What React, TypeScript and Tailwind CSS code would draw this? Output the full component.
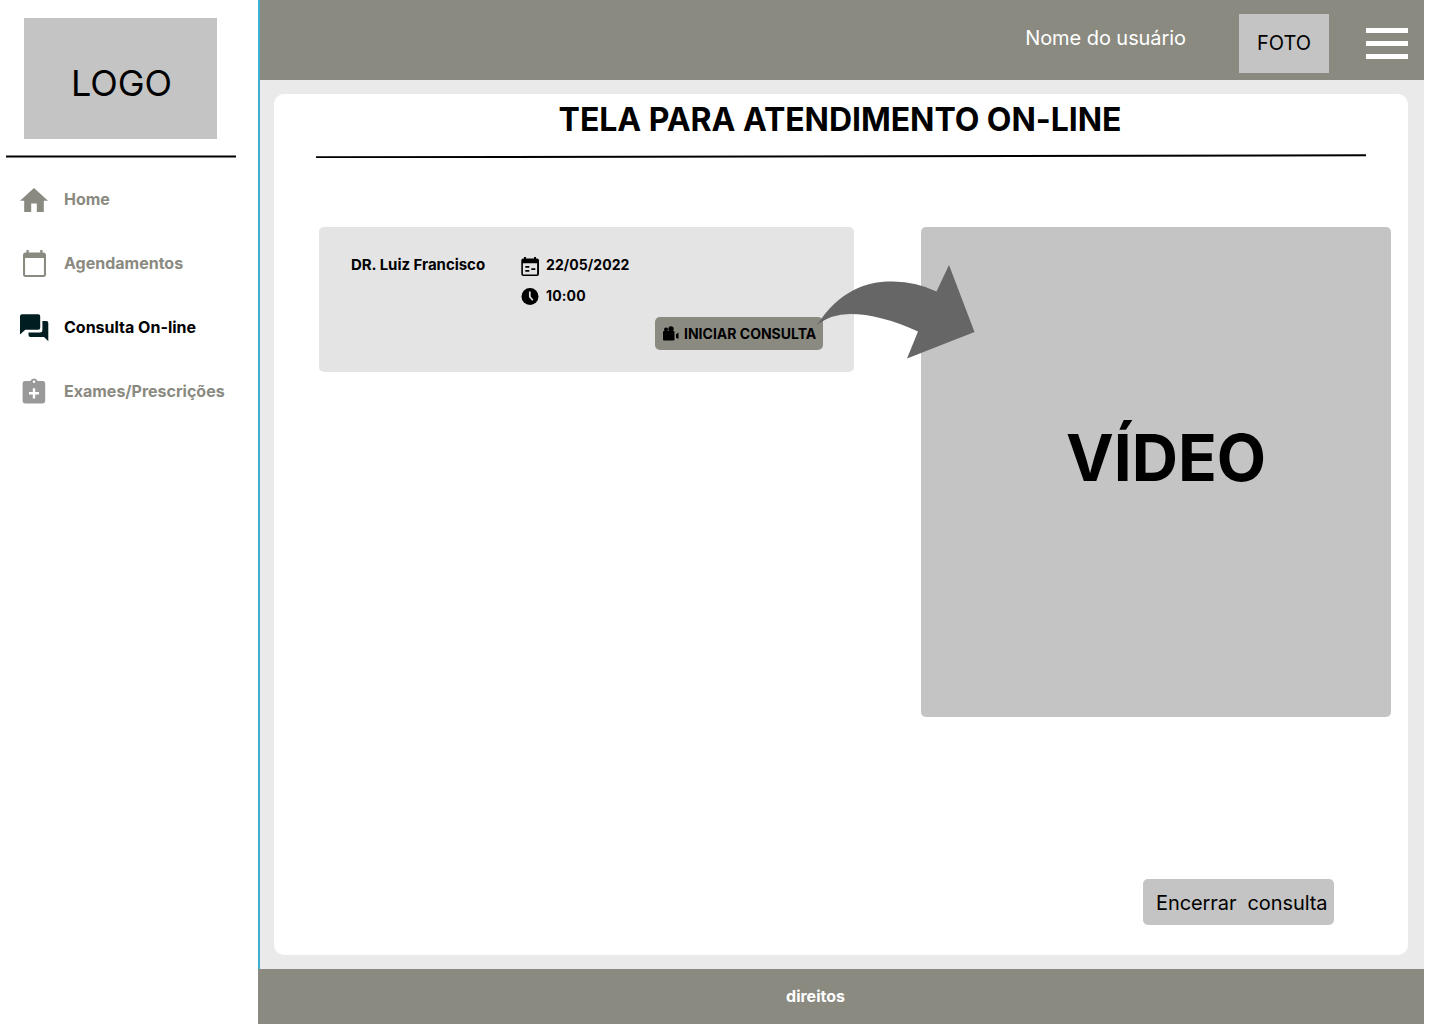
import React from "react";

function HomeIcon() {
  return (
    <svg className="mt-[18px] ml-5 h-6 w-7" viewBox="2 3 20 17" preserveAspectRatio="none" fill="#8a8a81">
      <path d="M10 20v-6h4v6h5v-8h3L12 3 2 12h3v8z" />
    </svg>
  );
}

function CalendarIcon() {
  return (
    <svg className="mt-4 ml-[23px] h-[27px] w-[23px]" viewBox="2 1 20 22" preserveAspectRatio="none" fill="#8a8a81">
      <path d="M20 3h-1V1h-2v2H7V1H5v2H4c-1.100 0-2 .9-2 2v16c0 1.100.9 2 2 2h16c1.100 0 2-.9 2-2V5c0-1.100-.9-2-2-2zm.2 18.300H3.800V7.500h16.400v13.800z" />
    </svg>
  );
}

function ChatIcon() {
  return (
    <svg className="mt-4 ml-5 h-[28px] w-[29px]" viewBox="0 0 29 28" fill="#001e21">
      <path d="M2 .2h16.200a2 2 0 0 1 2 2v11.500a2 2 0 0 1-2 2H5.300L0 20.500V2.200a2 2 0 0 1 2-2z" />
      <path d="M22.400 7H26.300a2 2 0 0 1 2 2v18.200l-4.300-4.200H10.500a2 2 0 0 1-2-2v-2.500h11.400a2.500 2.500 0 0 0 2.500-2.500z" />
    </svg>
  );
}

function ClipboardIcon() {
  return (
    <svg className="mt-4 ml-[22px] h-[26px] w-6" viewBox="0 0 24 26" fill="#999">
      <path
        fillRule="evenodd"
        d="M3 3h5.400a3.800 3.800 0 0 1 7.200 0H20.800a2.400 2.400 0 0 1 2.400 2.400v17.600a2.400 2.400 0 0 1-2.400 2.400H3a2.400 2.400 0 0 1-2.400-2.400V5.400A2.400 2.400 0 0 1 3 3zM12 2.400a1.300 1.300 0 1 0 0 2.600 1.300 1.300 0 0 0 0-2.600zM10.800 10.200v3.900H7v2.300h3.800v4h2.400v-4H17v-2.300h-3.800v-3.900z"
      />
    </svg>
  );
}

function NavItem({ icon, label, active }: { icon: React.ReactNode; label: string; active?: boolean }) {
  return (
    <li className="flex h-16">
      <div className="w-16 shrink-0">{icon}</div>
      <span className={active ? "mt-[17px] text-base font-bold text-black" : "mt-[17px] text-base font-bold text-[#8a8a81]"}>
        {label}
      </span>
    </li>
  );
}

function DateIcon() {
  return (
    <svg className="mt-px h-[19px] w-[18px]" viewBox="0 0 18 19">
      <path
        fillRule="evenodd"
        d="M3 0h2v1.500h8V0h2v1.500h1a2 2 0 0 1 2 2V17a2 2 0 0 1-2 2H2.300a2 2 0 0 1-2-2V3.500a2 2 0 0 1 2-2H3zM1.900 6.200v11.200h14.200V6.200zM4.300 9h4v1.700h-4zM4.300 13h4v1.700h-4zM10.300 11.200h4v1.700h-4z"
      />
    </svg>
  );
}

function ClockIcon() {
  return (
    <svg className="mt-px h-[17px] w-[18px]" viewBox="0 0 18 17">
      <circle cx="9" cy="8.500" r="8.500" />
      <path d="M8.800 3.500v5.200l3 3.500" fill="none" stroke="#e4e4e4" strokeWidth="1.700" />
    </svg>
  );
}

function CameraIcon() {
  return (
    <svg className="h-[15px] w-4" viewBox="0 0 16 15">
      <circle cx="3" cy="3.500" r="2" />
      <circle cx="8" cy="2.900" r="2.700" />
      <rect y="5" width="11.500" height="9.500" rx="1" />
      <path d="M13 8.200 15.500 6.500v6.500L13 11.700z" />
    </svg>
  );
}

export default function App() {
  return (
    <div className="flex h-[1024px] w-[1424px] bg-white font-['Inter',sans-serif] text-black">
      <aside className="w-[258px] shrink-0">
        <div className="mt-[18px] ml-6 flex h-[121px] w-[193px] justify-center bg-[#c4c4c4] pt-[43px] pl-0.5">
          <span className="text-[36px] leading-[44px] font-normal">LOGO</span>
        </div>
        <svg className="mt-4 ml-1.5 block h-[3px] w-[230px]" viewBox="0 0 230 3">
          <path d="M0 1.500h230" stroke="black" strokeWidth="2" />
        </svg>
        <ul className="mt-3">
          <NavItem icon={<HomeIcon />} label="Home" />
          <NavItem icon={<CalendarIcon />} label="Agendamentos" />
          <NavItem icon={<ChatIcon />} label="Consulta On-line" active />
          <NavItem icon={<ClipboardIcon />} label="Exames/Prescrições" />
        </ul>
      </aside>

      <div className="flex w-[1166px] flex-col">
        <div className="flex h-[969px] flex-col border-l-2 border-[#3dafd0] bg-[#eaeaea]">
          <header className="flex h-20 shrink-0 items-start justify-end bg-[#8a8a81] pr-4">
            <span className="mt-[26px] mr-[53px] text-[20px] leading-6 font-normal tracking-[-0.07px] text-white">
              Nome do usuário
            </span>
            <div className="mt-[14px] mr-[37px] flex h-[59px] w-[90px] justify-center bg-[#c4c4c4] pt-[17px] text-[20px] leading-6 font-normal tracking-[-0.05px]">
              FOTO
            </div>
            <button className="mt-7 flex w-[42px] flex-col gap-2" aria-label="Menu">
              <span className="h-[5px] w-full bg-white" />
              <span className="h-[5px] w-full bg-white" />
              <span className="h-[5px] w-full bg-white" />
            </button>
          </header>

          <main className="mt-[14px] ml-[14px] flex h-[861px] w-[1134px] flex-col rounded-[10px] bg-white">
            <h1 className="mt-1.5 pr-0.5 text-center text-[32px] leading-[39px] font-bold tracking-[-0.05px]">
              TELA PARA ATENDIMENTO ON-LINE
            </h1>
            <svg className="mt-[15px] ml-[42px] h-1 w-[1050px] shrink-0" viewBox="0 0 1050 4">
              <path d="M0 3.300 1050 1.300" stroke="black" strokeWidth="2" />
            </svg>

            <div className="mt-[69px] ml-[45px] flex items-start gap-[67px]">
              <section className="relative flex h-[145px] w-[535px] shrink-0 flex-col rounded-[5px] bg-[#e4e4e4] text-[14px] leading-[17px] font-bold">
                <div className="mt-[29px] flex pl-8">
                  <span className="w-[170px] text-[15px] leading-[18px] tracking-[-0.03px]">DR. Luiz Francisco</span>
                  <div className="flex flex-col gap-[14px]">
                    <div className="flex h-[17px] items-start gap-[7px]">
                      <DateIcon />
                      <span className="tracking-[0.06px]">22/05/2022</span>
                    </div>
                    <div className="flex h-[17px] items-start gap-[7px]">
                      <ClockIcon />
                      <span className="tracking-[0.15px]">10:00</span>
                    </div>
                  </div>
                </div>
                <button className="mt-[13px] ml-[336px] flex h-[33px] w-[168px] items-center gap-[5px] rounded-[5px] bg-[#8a8a81] pl-2 whitespace-nowrap">
                  <CameraIcon />
                  <span>INICIAR CONSULTA</span>
                </button>
                <svg className="absolute top-[37px] left-[497px] h-24 w-40" viewBox="816 264 160 96" fill="#666">
                  <path d="M817 325C840 290 867 281 893 281.500Q917 282 936.500 291.500L949 265 974.500 332 907 358.500 918 331.500Q880 314 850 314 831 314 817 325z" />
                </svg>
              </section>
              <section className="flex h-[490px] w-[470px] shrink-0 justify-center rounded-[5px] bg-[#c4c4c4] pt-[192px] pl-5">
                <span className="text-[64px] leading-[77px] font-bold">VÍDEO</span>
              </section>
            </div>

            <button className="mt-[162px] ml-[869px] flex h-[46px] w-[190.500px] items-center rounded-[5px] bg-[#c4c4c4] pt-0.5 pl-[13px] text-[20px] leading-6 font-normal tracking-[-0.08px] whitespace-pre">
              {"Encerrar  consulta"}
            </button>
          </main>
        </div>
        <footer className="flex h-[55px] justify-center bg-[#8a8a81] pt-[17px] pr-[51px] text-base leading-[20px] font-bold text-white">
          direitos
        </footer>
      </div>
    </div>
  );
}
